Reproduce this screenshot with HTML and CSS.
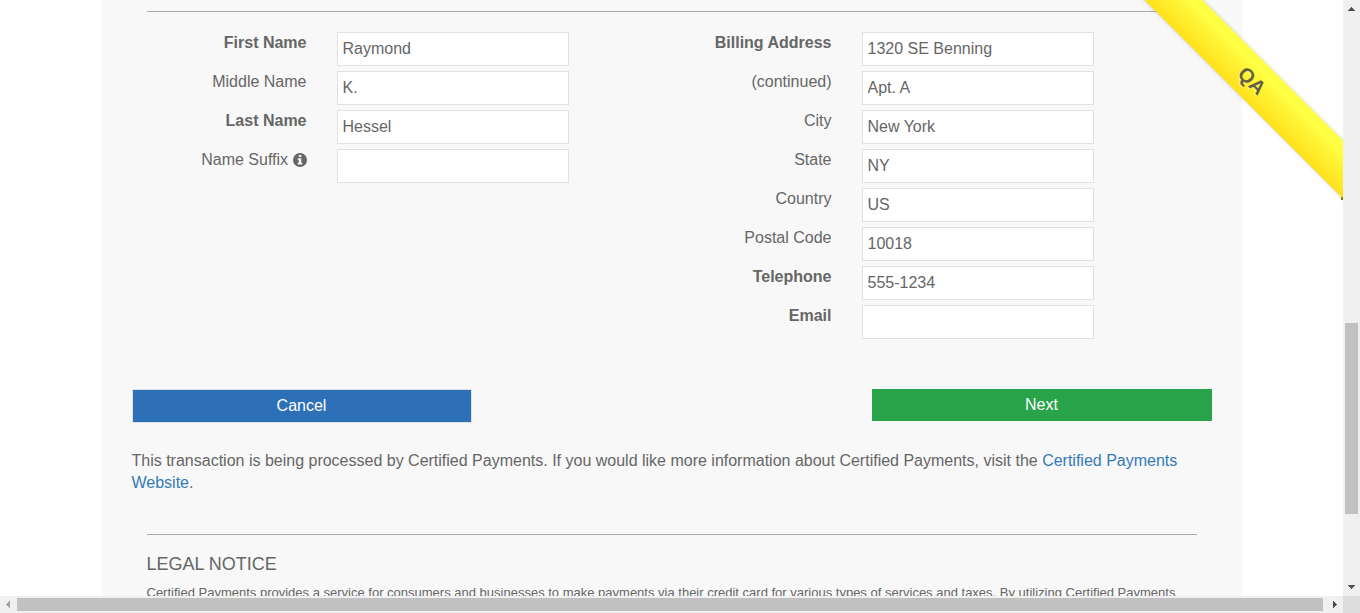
FILE: index.html
```html
<!DOCTYPE html>
<html lang="en">
<head>
<meta charset="utf-8">
<title>Certified Payments</title>
<link rel="stylesheet" href="styles.css">
</head>
<body>
<div class="frame">
  <div class="viewport">
    <main class="container">
      <hr class="rule">
      <form class="form">
        <div class="columns">
          <div class="fields">
            <div class="field"><label class="label required" for="first">First Name</label><input class="input" id="first" type="text" value="Raymond"></div>
            <div class="field"><label class="label" for="middle">Middle Name</label><input class="input" id="middle" type="text" value="K."></div>
            <div class="field"><label class="label required" for="last">Last Name</label><input class="input" id="last" type="text" value="Hessel"></div>
            <div class="field"><label class="label" for="suffix">Name Suffix <svg class="info" viewBox="0 0 14 14" aria-hidden="true"><circle cx="7" cy="7" r="7" fill="#666"/><path fill="#f8f8f8" d="M5.8 2h2.5v2.1H5.8zM4.7 5.2h3.6v4.6h1v1.6H4.7V9.8h1.1v-3H4.7z"/></svg></label><input class="input" id="suffix" type="text"></div>
          </div>
          <div class="fields">
            <div class="field"><label class="label required" for="address">Billing Address</label><input class="input" id="address" type="text" value="1320 SE Benning"></div>
            <div class="field"><label class="label" for="address2">(continued)</label><input class="input" id="address2" type="text" value="Apt. A"></div>
            <div class="field"><label class="label" for="city">City</label><input class="input" id="city" type="text" value="New York"></div>
            <div class="field"><label class="label" for="state">State</label><input class="input" id="state" type="text" value="NY"></div>
            <div class="field"><label class="label" for="country">Country</label><input class="input" id="country" type="text" value="US"></div>
            <div class="field"><label class="label" for="postal">Postal Code</label><input class="input" id="postal" type="text" value="10018"></div>
            <div class="field"><label class="label required" for="phone">Telephone</label><input class="input" id="phone" type="tel" value="555-1234"></div>
            <div class="field"><label class="label required" for="email">Email</label><input class="input" id="email" type="email"></div>
          </div>
        </div>
        <div class="actions">
          <button class="button cancel" type="button">Cancel</button>
          <button class="button next" type="button">Next</button>
        </div>
      </form>
      <p class="processor">This transaction is being processed by Certified Payments. If you would like more information about Certified Payments, visit the <a class="link" href="#">Certified Payments Website</a>.</p>
      <hr class="rule">
      <section class="legal">
        <h2 class="legal-title">LEGAL NOTICE</h2>
        <p class="legal-text">Certified Payments provides a service for consumers and businesses to make payments via their credit card for various types of services and taxes. By utilizing Certified Payments</p>
      </section>
    </main>
    <div class="ribbon"><span class="ribbon-text">QA</span></div>
    <div class="ribbon-end"></div>
  </div>
  <div class="scroll-y">
    <svg class="arrow" viewBox="0 0 17 17" aria-hidden="true"><path fill="#505050" d="M8 7h1v1h1v1h1v1h1v1H5v-1h1V9h1V8h1z"/></svg>
    <div class="track-y"><div class="thumb-y"></div></div>
    <svg class="arrow" viewBox="0 0 17 17" aria-hidden="true"><path fill="#505050" d="M5 6h7v1h-1v1h-1v1H9v1H8V9H7V8H6V7H5z"/></svg>
  </div>
  <div class="scroll-x">
    <svg class="arrow" viewBox="0 0 17 17" aria-hidden="true"><path fill="#a3a3a3" d="M10 5v7H9v-1H8v-1H7V9H6V8h1V7h1V6h1V5z"/></svg>
    <div class="track-x"><div class="thumb-x"></div></div>
    <svg class="arrow" viewBox="0 0 17 17" aria-hidden="true"><path fill="#505050" d="M7 5v7h1v-1h1v-1h1V9h1V8h-1V7H9V6H8V5z"/></svg>
  </div>
  <div class="corner"></div>
</div>
</body>
</html>
```
FILE: styles.css
```css
* { box-sizing: border-box; }

body {
  margin: 0;
  color: #666;
  background: #fff;
  font-family: "Liberation Sans", Arial, sans-serif;
  font-size: 16px;
  line-height: 22px;
}

.frame {
  display: grid;
  grid-template-columns: minmax(0, 1fr) 17px;
  grid-template-rows: minmax(0, 1fr) 17px;
  height: 100vh;
  overflow: hidden;
}

.viewport { position: relative; overflow: hidden; }

.container {
  max-width: 1140px;
  min-height: 100%;
  margin: 0 auto;
  padding: 11px 30px 0;
  background: #f8f8f8;
}

.rule { margin: 0 15px; border: 0; border-top: 1px solid #a9a9a9; }

.columns {
  display: grid;
  grid-template-columns: 1fr 1fr;
  margin: 20px 15px 50px;
}

.fields { display: flex; flex-direction: column; gap: 5px; }

.field {
  display: grid;
  grid-template-columns: minmax(0, 160fr) minmax(0, 232fr) 73fr;
  column-gap: 30px;
  align-items: start;
}

.label { line-height: 22px; text-align: right; }
.required { font-weight: bold; }
.info { width: 14px; height: 14px; vertical-align: -2px; }

.input {
  width: 100%;
  height: 34px;
  padding: 0 5px;
  border: 1px solid #e1e1e1;
  border-radius: 0;
  background: #fff;
  color: #666;
  font: inherit;
}

.actions { display: flex; justify-content: space-between; align-items: flex-start; }

.button {
  width: 340px;
  padding: 5px;
  border: 0;
  color: #fff;
  font: inherit;
}

.cancel { border: 1px solid #e1e1e1; background: #2d70b7; }
.next { background: #29a349; }

.processor { margin: 27px 0 40px; }
.link { color: #337ab7; text-decoration: none; }

.legal { margin: 18px 15px 0; }
.legal-title { margin: 0 0 8px; font-size: 18px; font-weight: normal; line-height: 22px; }
.legal-text { margin: 0; font-size: 13px; line-height: 20px; }

.ribbon {
  position: absolute;
  top: 59px;
  right: -110px;
  width: 400px;
  height: 41px;
  transform: rotate(45deg);
  background: linear-gradient(#ffff44 20%, #ffe01a);
  box-shadow: 0 0 3px rgba(0, 0, 80, 0.25);
  text-align: center;
}

.ribbon-text {
  color: #666040;
  font-size: 20px;
  font-weight: bold;
  line-height: 44px;
  text-shadow: 0 1px 0 #ffff99;
}

.ribbon-end {
  position: absolute;
  top: 197px;
  right: 0;
  width: 2px;
  height: 3px;
  background: #6b8e00;
}

.scroll-y { display: flex; flex-direction: column; background: #f0f0f0; }
.scroll-x { display: flex; background: #f0f0f0; }
.arrow { flex: none; width: 17px; height: 17px; }
.track-y { flex: 1; padding: 0 2px; display: grid; grid-template-rows: 306fr 191fr 65fr; }
.thumb-y { grid-row: 2; background: #c1c1c1; }
.track-x { flex: 1; padding: 2px 0; }
.thumb-x { width: 99.8%; height: 100%; background: #c1c1c1; }
.corner { background: #dcdcdc; }
```
